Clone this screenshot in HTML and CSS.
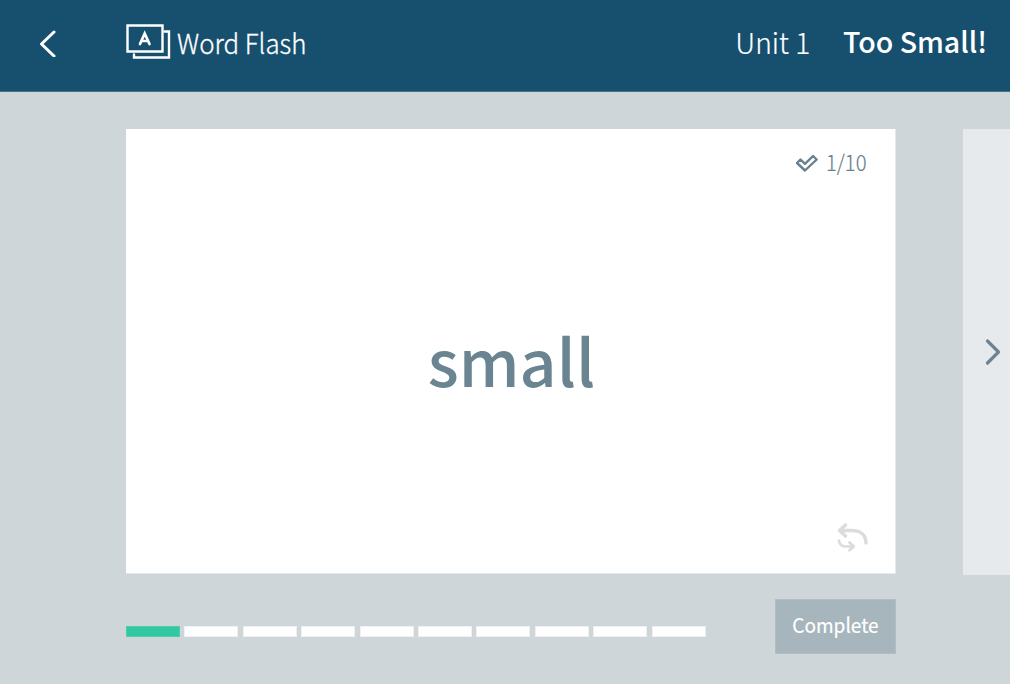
FILE: index.html
```html
<!DOCTYPE html>
<html lang="en">
<head>
<meta charset="utf-8">
<title>Word Flash</title>
<link rel="stylesheet" href="styles.css">
</head>
<body>
<div class="app">
  <header class="header">
    <svg class="back" width="18" height="28" viewBox="0 0 18 28"><path d="M16 3 3.500 15 16 27"/></svg>
    <svg class="cards" width="46" height="36" viewBox="0 0 46 36"><path d="M1.500 1.500h35v26h-35z"/><path d="M38.500 7.500h4.500v26h-35v-3"/><path class="letter" d="M14 20 18.700 9.500 23.500 20M16 17h5.500"/></svg>
    <h1 class="activity">Word Flash</h1>
    <span class="unit">Unit 1</span>
    <span class="title">Too Small!</span>
  </header>
  <main class="stage">
    <section class="card">
      <div class="counter">
        <svg width="24" height="20" viewBox="0 0 24 20"><path d="M2 10 5.500 6.500 10 10.800 18 3 21.700 6.500 10 17.500z"/></svg>
        <span class="count">1/10</span>
      </div>
      <div class="word">small</div>
      <svg class="flip" width="34" height="30" viewBox="0 0 34 30"><path class="arc" d="M9.500 3 3.500 8.500l6 5.500M4 8.500h12C25 8.500 30 13.500 30 21"/><path class="arc-small" d="M3 18.500C3 22 6 24.500 9 24.500h8M13.500 20.500l4.300 4-4.300 3.800"/></svg>
    </section>
    <section class="next">
      <svg width="18" height="28" viewBox="0 0 18 28"><path d="M3.500 3 14.500 14 3.500 25"/></svg>
    </section>
  </main>
  <footer class="footer">
    <div class="progress"><i class="step done"></i><i class="step"></i><i class="step"></i><i class="step"></i><i class="step"></i><i class="step"></i><i class="step"></i><i class="step"></i><i class="step"></i><i class="step"></i></div>
    <button class="complete"><span class="label">Complete</span></button>
  </footer>
</div>
</body>
</html>
```
FILE: styles.css
```css
* { box-sizing: border-box; }
body { margin: 0; font-family: "Noto Sans CJK KR", "Noto Sans", sans-serif; }
svg { flex: none; fill: none; stroke-linecap: round; stroke-linejoin: round; }
.app { width: 1010px; height: 684px; overflow: hidden; background: #ced6d9; }
.header { height: 92px; padding: 0 23px 5px 39px; display: flex; align-items: center; background: #17506f; border-bottom: 1px solid #477489; color: #fff; }
.back { stroke: #fff; stroke-width: 3; margin-left: -1px; }
.cards { stroke: #fff; stroke-width: 2.400; margin: -2px 0 0 70px; stroke-linejoin: miter; }
.letter { stroke-width: 2.700; }
.activity { margin: -3px auto 0 5px; font-size: 27.500px; font-weight: 300; line-height: 40px; white-space: nowrap; -webkit-text-stroke: .3px; transform: scaleX(.94); transform-origin: left; }
.unit { font-size: 29px; font-weight: 300; line-height: 40px; margin: -5px 33px 0 0; white-space: nowrap; -webkit-text-stroke: .2px; transform: scaleX(.97); transform-origin: right; }
.title { font-size: 28.500px; font-weight: 500; line-height: 40px; margin-top: -4px; white-space: nowrap; }
.stage { height: 483px; padding: 37px 0 0 126px; display: flex; gap: 67px; }
.card { width: 770px; height: 445px; padding: 18px 25px 21px; display: flex; flex-direction: column; background: #fff; border: solid #e5e9eb; border-width: 0 1px 1px 0; }
.counter { height: 32px; padding-right: 1px; display: flex; align-items: center; justify-content: flex-end; gap: 7px; color: #68818e; }
.counter svg { stroke: #68818e; stroke-width: 2.400; }
.count { width: 43px; font-size: 22px; font-weight: 300; line-height: 32px; margin-top: -5px; -webkit-text-stroke: .2px; transform: scaleX(.92); transform-origin: left; }
.word { flex: 1; padding: 16px 0 0 2px; display: flex; align-items: center; justify-content: center; color: #6a8491; font-size: 64.500px; font-weight: 500; line-height: 100px; }
.flip { align-self: flex-end; stroke: #dcdcdc; }
.arc { stroke-width: 3.500; }
.arc-small { stroke-width: 2.700; }
.next { flex: 1; height: 446px; display: flex; align-items: center; padding-left: 21px; background: #e6eaec; }
.next svg { stroke: #6a8491; stroke-width: 3.200; }
.footer { height: 109px; padding: 24px 114px 0 126px; display: flex; justify-content: space-between; }
.progress { display: flex; gap: 4.400px; margin-top: 27px; }
.step { width: 54px; height: 11px; background: #fff; border: 1px solid #eef1f2; }
.done { background: #32c8a2; border-color: #4dcdad; }
.complete { width: 121px; height: 55px; padding: 0 0 5px; border: 1px solid #b1bec4; background: #a7b5bc; color: #fff; font-family: inherit; font-size: 20.500px; font-weight: 400; line-height: 32px; }
.label { display: inline-block; transform: scaleX(.93); -webkit-text-stroke: .2px; }
```
